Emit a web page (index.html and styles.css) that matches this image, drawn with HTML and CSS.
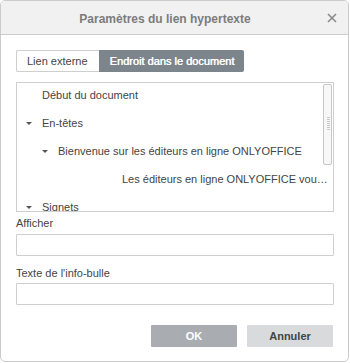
FILE: index.html
```html
<!DOCTYPE html>
<html>
<head>
    <title>Paramètres du lien hypertexte</title>
    <link rel="stylesheet" href="styles.css">
</head>
<body>
    <div class="dialog">
        <div class="header">
            <div class="title">Paramètres du lien hypertexte</div>
            <svg class="close" width="10" height="10" viewBox="0 0 10 10">
                <path d="M 1 1 L 9 9 M 9 1 L 1 9" stroke="#8a8a8a" stroke-width="1.6" fill="none"/>
            </svg>
        </div>
        <div class="body">
            <!-- Link type tabs -->
            <div class="tabs">
                <div class="tab">Lien externe</div>
                <div class="tab active">Endroit dans le document</div>
            </div>

            <!-- Document tree -->
            <div class="tree">
                <div class="row level0"><span class="arrow empty"></span><span class="label">Début du document</span></div>
                <div class="row level0"><span class="arrow"></span><span class="label">En-têtes</span></div>
                <div class="row level1"><span class="arrow"></span><span class="label">Bienvenue sur les éditeurs en ligne ONLYOFFICE</span></div>
                <div class="row level2"><span class="label">Les éditeurs en ligne ONLYOFFICE vou…</span></div>
                <div class="row level0"><span class="arrow"></span><span class="label">Signets</span></div>
                <div class="scrollbar"><div class="grip"></div></div>
            </div>

            <div class="field-label first">Afficher</div>
            <div class="input"></div>

            <div class="field-label">Texte de l'info-bulle</div>
            <div class="input"></div>

            <div class="buttons">
                <div class="btn primary">OK</div>
                <div class="btn">Annuler</div>
            </div>
        </div>
    </div>
</body>
</html>
```

FILE: styles.css
```css
body {
    margin: 0;
    font-family: "Liberation Sans", Arial, sans-serif;
    font-size: 11px;
    color: #444;
    background: white;
}

.dialog {
    width: 347px;
    height: 360px;
    border: 1px solid #cbcbcb;
    border-radius: 5px;
    overflow: hidden;
}

.header {
    position: relative;
    height: 33px;
    background: #f1f1f1;
    border-bottom: 1px solid #cbcbcb;
    display: flex;
    align-items: center;
}

.title {
    flex: 1;
    text-align: center;
    padding-right: 19px;
    font-size: 12px;
    font-weight: bold;
    color: #7c7c7c;
    padding-top: 3px;
}

.close {
    position: absolute;
    right: 11px;
    top: 12px;
}

.body {
    padding: 15px 14px 0 15px;
}

.tabs {
    display: flex;
    height: 22px;
}

.tab {
    height: 20px;
    line-height: 20px;
    border: 1px solid #cfcfcf;
    border-right: none;
    border-radius: 2px 0 0 2px;
    padding: 0 11px 0 10px;
    background: white;
}

.tab.active {
    height: 22px;
    line-height: 22px;
    border: none;
    border-radius: 0 2px 2px 0;
    background: #7d858c;
    color: white;
    padding: 0 10px 0 11px;
    text-shadow: 0.4px 0 0 white;
}

.tree {
    position: relative;
    margin-top: 10px;
    height: 128px;
    border: 1px solid #cfcfcf;
    overflow: hidden;
}

.row {
    display: flex;
    align-items: center;
    height: 24px;
    padding-bottom: 4px;
    white-space: nowrap;
}

.level0 {
    padding-left: 9px;
}

.level1 {
    padding-left: 25px;
}

.level2 {
    padding-left: 105px;
}

.arrow {
    width: 16px;
    height: 3px;
    position: relative;
    flex: none;
}

.arrow::before {
    content: "";
    position: absolute;
    left: 0;
    top: 0;
    border-left: 3px solid transparent;
    border-right: 3px solid transparent;
    border-top: 3px solid #555;
}

.arrow.empty::before {
    display: none;
}

.scrollbar {
    position: absolute;
    right: 1px;
    top: 1px;
    width: 7px;
    height: 79px;
    border: 1px solid #c8c8c8;
    border-radius: 2px;
    background: #f7f7f7;
}

.grip {
    margin: 32px 0 0 3px;
    width: 3px;
    height: 13px;
    background: repeating-linear-gradient(to bottom, #c8c8c8 0, #c8c8c8 1px, transparent 1px, transparent 2px);
}

.field-label {
    margin-top: 9px;
    margin-bottom: 2px;
    line-height: 16px;
}

.field-label.first {
    margin-top: 3px;
    margin-bottom: 3px;
}

.input {
    height: 20px;
    border: 1px solid #cfcfcf;
    border-radius: 1px;
}

.buttons {
    display: flex;
    justify-content: flex-end;
    gap: 10px;
    margin-top: 20px;
    padding-right: 1px;
}

.btn {
    width: 86px;
    height: 22px;
    line-height: 22px;
    text-align: center;
    font-weight: bold;
    background: #d8dadc;
    color: #444;
    border-radius: 1px;
}

.btn.primary {
    background: #a9adb1;
    color: white;
}
```
